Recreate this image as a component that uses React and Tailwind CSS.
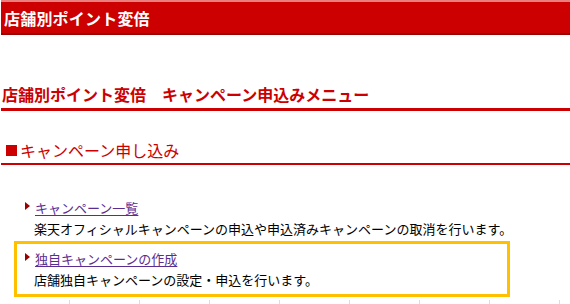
export default function App() {
  const Tri = () => (
    <svg width="5" height="8" viewBox="0 0 5 8" className="shrink-0 mr-[5px] mb-[4px]">
      <path d="M0 0 L5 4 L0 8 Z" fill="#990000" />
    </svg>
  );
  return (
    <div className="w-[570px] h-[304px] overflow-hidden bg-white font-['Noto_Sans_CJK_JP','Noto_Sans',sans-serif] text-black">
      <div className="ml-px h-[35px] bg-[#cc0000] border-t-2 border-t-[#e88080] border-b-2 border-b-[#990000] flex items-center pl-[3px]">
        <h1 className="text-white font-bold text-[16px] leading-[16px] tracking-[0.2px]">店舗別ポイント変倍</h1>
      </div>

      <div className="mt-[51px] ml-px pl-px pb-[6px] border-b-[3px] border-[#cc0000]">
        <h2 className="text-[#cc0000] font-bold text-[16px] leading-[16px]">店舗別ポイント変倍　キャンペーン申込みメニュー</h2>
      </div>

      <div className="mt-[31px] ml-px pl-[5px] pb-[5px] border-b-2 border-[#cc0000]">
        <h3 className="text-[#cc0000] text-[16px] leading-[16px] flex items-center">
          <span className="inline-block w-[11px] h-[11px] bg-[#cc0000] mr-[3px]"></span>
          キャンペーン申し込み
        </h3>
      </div>

      <div className="mt-[32px] pl-[25px] text-[13px] leading-[21px]">
        <div className="flex items-center">
          <Tri />
          <a href="#" className="text-[#5c2d91] underline underline-offset-2">キャンペーン一覧</a>
        </div>
        <p className="pl-[9px]">楽天オフィシャルキャンペーンの申込や申込済みキャンペーンの取消を行います。</p>
      </div>

      <div className="mt-[2px] ml-[14px] w-[496px] h-[56px] border-[3px] border-[#ffc000] pt-[4px] pl-[8px] text-[13px] leading-[21px]">
        <div className="flex items-center">
          <Tri />
          <a href="#" className="text-[#5c2d91] underline underline-offset-2">独自キャンペーンの作成</a>
        </div>
        <p className="pl-[9px]">店舗独自キャンペーンの設定・申込を行います。</p>
      </div>

      <div className="mt-[3px] flex">
        {[0, 1, 2, 3, 4, 5, 6, 7].map((i) => (
          <div key={i} className="w-[70px] h-[4px] border-r border-[#dddddd] shrink-0"></div>
        ))}
      </div>
    </div>
  );
}
